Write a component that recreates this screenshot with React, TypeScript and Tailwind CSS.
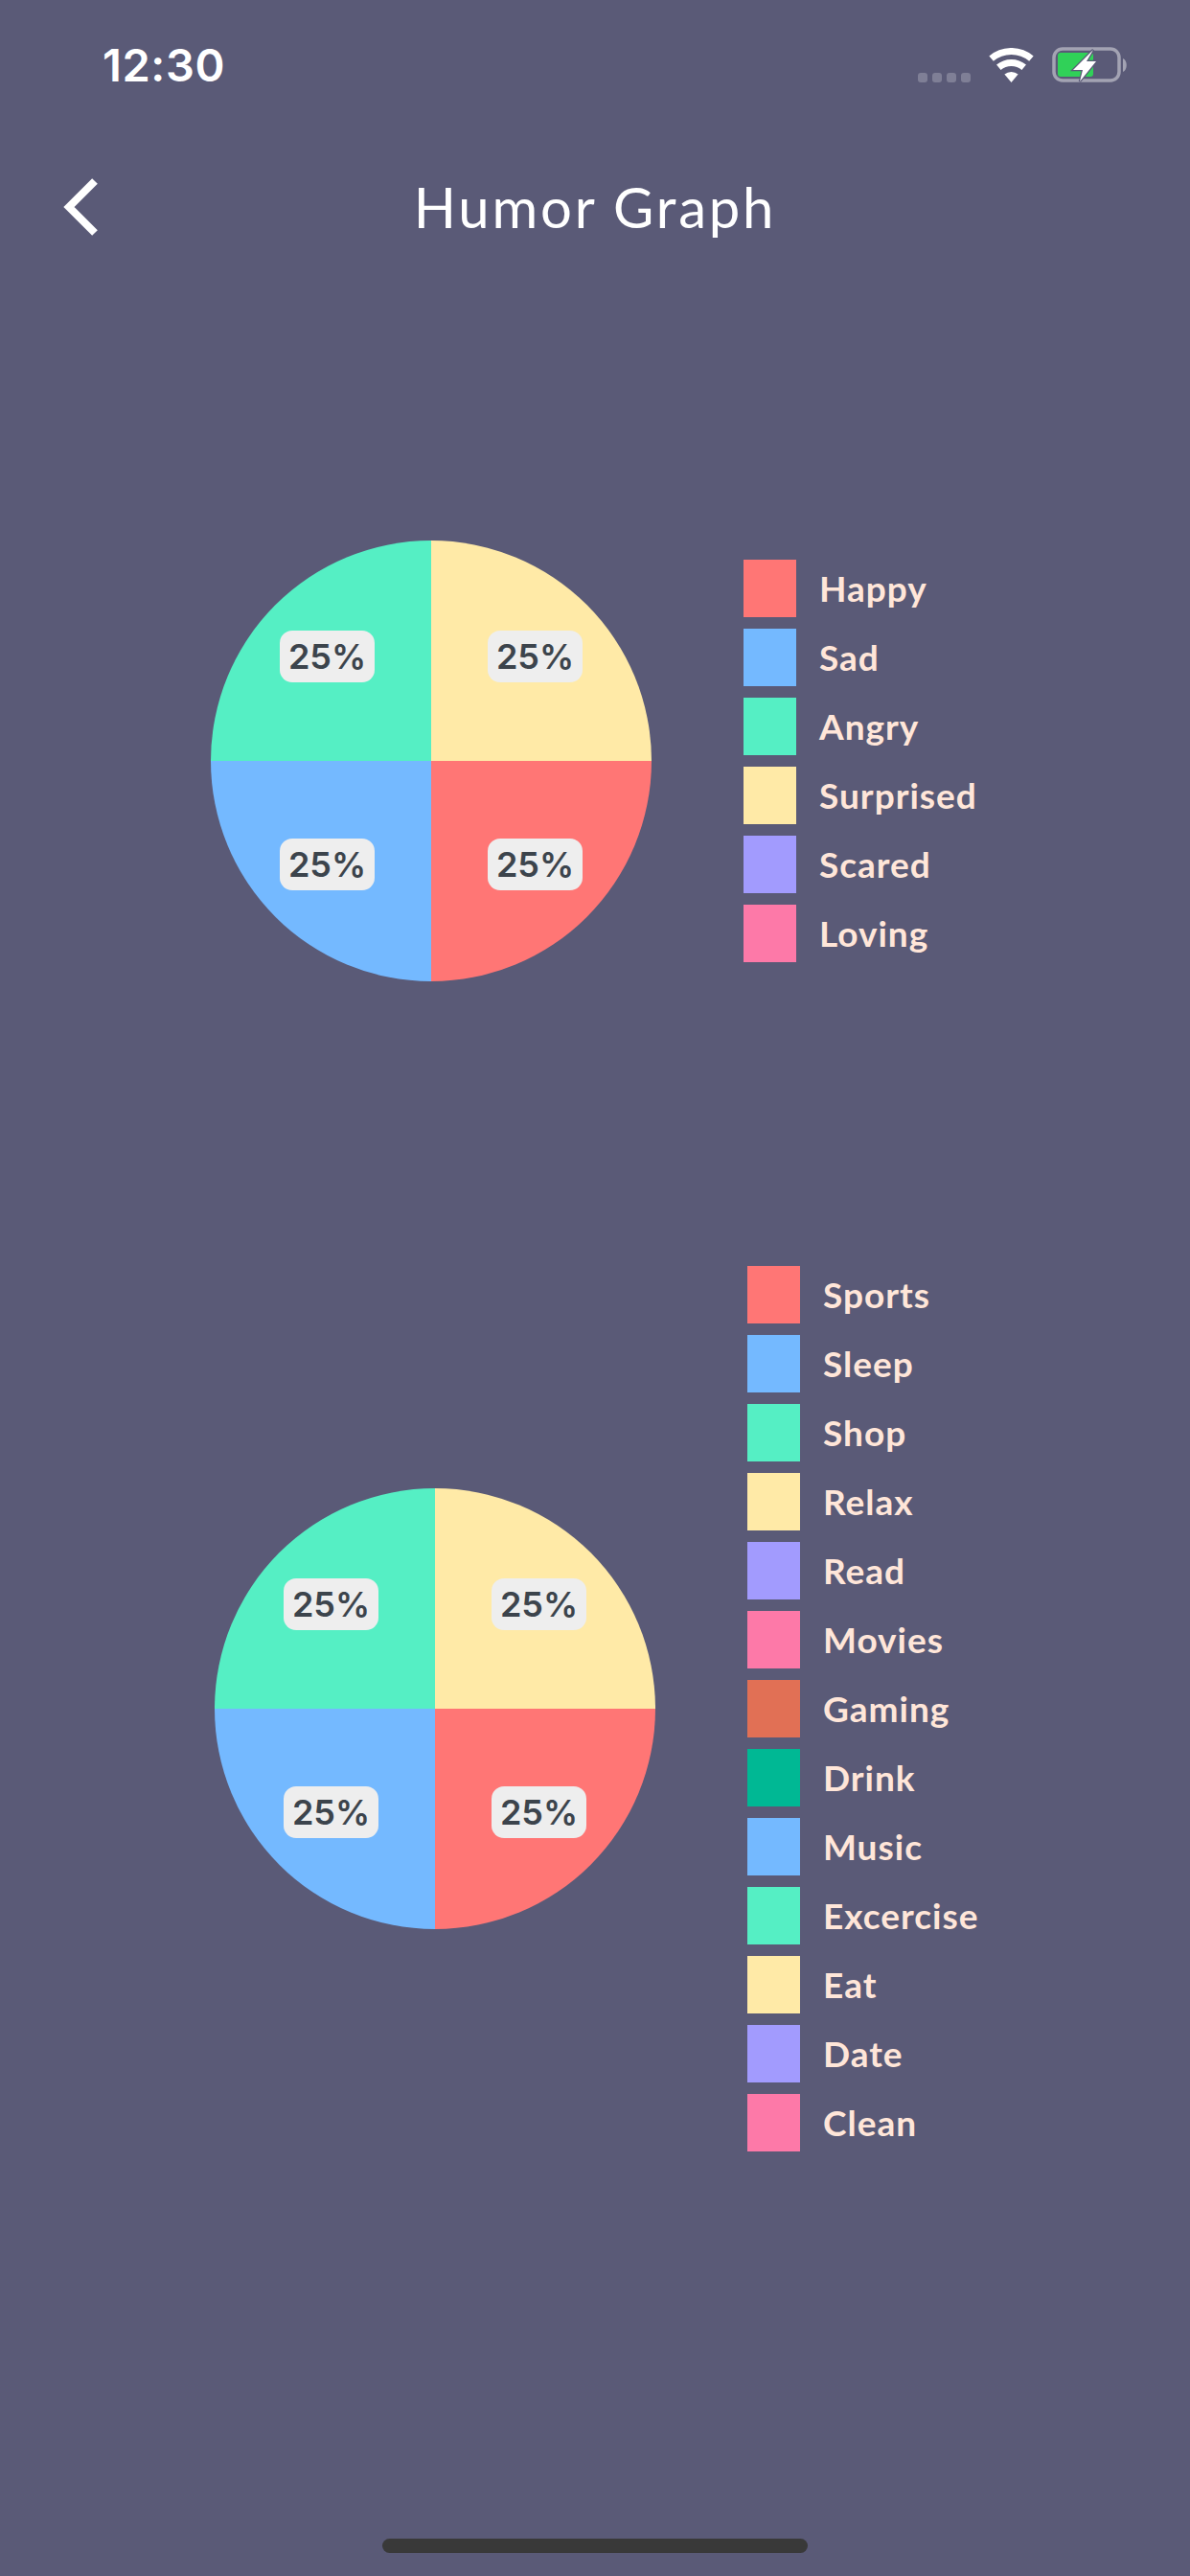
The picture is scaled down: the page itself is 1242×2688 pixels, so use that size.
import React from "react";

const moods = [
  { name: "Happy", color: "bg-[#ff7675]" },
  { name: "Sad", color: "bg-[#74b9ff]" },
  { name: "Angry", color: "bg-[#55efc4]" },
  { name: "Surprised", color: "bg-[#ffeaa7]" },
  { name: "Scared", color: "bg-[#a29bfe]" },
  { name: "Loving", color: "bg-[#fd79a8]" },
];

const activities = [
  { name: "Sports", color: "bg-[#ff7675]" },
  { name: "Sleep", color: "bg-[#74b9ff]" },
  { name: "Shop", color: "bg-[#55efc4]" },
  { name: "Relax", color: "bg-[#ffeaa7]" },
  { name: "Read", color: "bg-[#a29bfe]" },
  { name: "Movies", color: "bg-[#fd79a8]" },
  { name: "Gaming", color: "bg-[#e17055]" },
  { name: "Drink", color: "bg-[#00b894]" },
  { name: "Music", color: "bg-[#74b9ff]" },
  { name: "Excercise", color: "bg-[#55efc4]" },
  { name: "Eat", color: "bg-[#ffeaa7]" },
  { name: "Date", color: "bg-[#a29bfe]" },
  { name: "Clean", color: "bg-[#fd79a8]" },
];

function PercentLabel({ className }: { className: string }) {
  return (
    <div
      className={`absolute flex h-[54px] w-[99px] items-center justify-center rounded-[13px] bg-[#eeeeee] font-['Inter',sans-serif] text-[36px] font-semibold text-[#3c444c] ${className}`}
    >
      25%
    </div>
  );
}

function Pie() {
  return (
    <div className="relative h-[460px] w-[460px] shrink-0">
      <svg viewBox="0 0 460 460" className="h-full w-full">
        <path d="M230 230 V0 A230 230 0 0 1 460 230 Z" fill="#ffeaa7" />
        <path d="M230 230 H460 A230 230 0 0 1 230 460 Z" fill="#ff7675" />
        <path d="M230 230 V460 A230 230 0 0 1 0 230 Z" fill="#74b9ff" />
        <path d="M230 230 H0 A230 230 0 0 1 230 0 Z" fill="#55efc4" />
      </svg>
      <PercentLabel className="left-[72px] top-[94px]" />
      <PercentLabel className="left-[289px] top-[94px]" />
      <PercentLabel className="left-[72px] top-[311px]" />
      <PercentLabel className="left-[289px] top-[311px]" />
    </div>
  );
}

function Legend({ items }: { items: { name: string; color: string }[] }) {
  return (
    <div className="flex flex-col gap-3">
      {items.map((item) => (
        <div key={item.name} className="flex h-[60px] items-center gap-6">
          <div className={`h-[60px] w-[55px] ${item.color}`} />
          <span className="font-['Lato',sans-serif] text-[37px] font-bold tracking-[1px] text-[#ffe6d9]">
            {item.name}
          </span>
        </div>
      ))}
    </div>
  );
}

function Wifi() {
  return (
    <svg viewBox="0 0 47 37" className="h-[37px] w-[47px]" fill="none">
      <path d="M2.6 11.1 A32.5 32.5 0 0 1 44.4 11.1" stroke="white" strokeWidth="7" />
      <path d="M10.3 20.3 A20.5 20.5 0 0 1 36.7 20.3" stroke="white" strokeWidth="7" />
      <path d="M16.4 27.6 A11 11 0 0 1 30.6 27.6 L23.5 36 Z" fill="white" />
    </svg>
  );
}

function Battery() {
  return (
    <svg viewBox="0 0 79 38" className="h-[38px] w-[79px]" fill="none">
      <rect x="2" y="2" width="68" height="33" rx="9" stroke="#a3a3b3" strokeWidth="3.5" />
      <path d="M74 12 C79 14 79 24 74 26 Z" fill="#a3a3b3" />
      <rect x="6" y="6" width="37" height="25" rx="3" fill="#30d158" />
      <path
        d="M43 3 L22 24 H32 L29 36 L46 15 H36 Z"
        fill="white"
        stroke="#5a5a77"
        strokeWidth="2.5"
        paintOrder="stroke"
      />
    </svg>
  );
}

export default function App() {
  return (
    <div className="flex h-[2688px] w-[1242px] flex-col bg-[#5a5a77]">
      {/* status bar */}
      <div className="flex items-start justify-between pl-[107px] pr-[65px] pt-[41px]">
        <span className="font-['Inter',sans-serif] text-[47px] font-semibold leading-[54px] tracking-[0.6px] text-white">
          12:30
        </span>
        <div className="mt-2 flex items-end gap-[19px]">
          <div className="mb-[1px] flex gap-[5px]">
            <div className="h-[10px] w-[10px] rounded-[3px] bg-[#7f7f96]" />
            <div className="h-[10px] w-[10px] rounded-[3px] bg-[#7f7f96]" />
            <div className="h-[10px] w-[10px] rounded-[3px] bg-[#7f7f96]" />
            <div className="h-[10px] w-[10px] rounded-[3px] bg-[#7f7f96]" />
          </div>
          <Wifi />
          <Battery />
        </div>
      </div>

      {/* header */}
      <div className="mt-[91px] flex h-[60px] items-center justify-between px-[66px]">
        <svg viewBox="0 0 37 60" className="h-[60px] w-[37px]" fill="none">
          <path d="M33 3 L6 30 L33 57" stroke="white" strokeWidth="8" />
        </svg>
        <h1 className="font-['Lato',sans-serif] text-[58px] font-normal leading-[60px] tracking-[2.8px] text-white">
          Humor Graph
        </h1>
        <div className="w-[37px]" />
      </div>

      {/* charts */}
      <div className="mt-[318px] flex items-center gap-24 pl-[220px]">
        <Pie />
        <Legend items={moods} />
      </div>
      <div className="mt-[297px] flex items-center gap-24 pl-[224px]">
        <Pie />
        <Legend items={activities} />
      </div>

      {/* home indicator */}
      <div className="mb-[24px] mt-auto h-[15px] w-[444px] self-center rounded-full bg-[#393939]" />
    </div>
  );
}
